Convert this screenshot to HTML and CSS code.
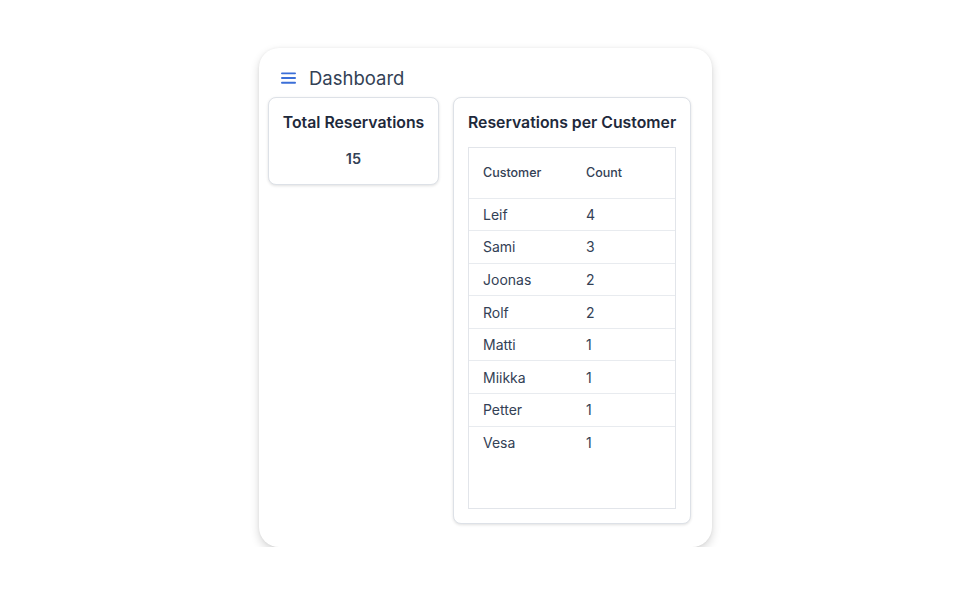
FILE: index.html
```html
<!DOCTYPE html>
<html lang="en">
<head>
<meta charset="utf-8">
<title>Dashboard</title>
<link rel="stylesheet" href="styles.css">
</head>
<body>
<div class="page">
  <div class="panel">
    <div class="header">
      <svg class="menu" width="16" height="12" viewBox="0 0 16 12"><rect x="0" y="0" width="16" height="2" rx="1"/><rect x="0" y="5" width="16" height="2" rx="1"/><rect x="0" y="10" width="16" height="2" rx="1"/></svg>
      <span class="title">Dashboard</span>
    </div>
    <div class="grid">
      <div class="card total">
        <h2 class="card-title">Total Reservations</h2>
        <div class="total-value">15</div>
      </div>
      <div class="card per-customer">
        <h2 class="card-title">Reservations per Customer</h2>
        <div class="table-box">
          <table class="table">
            <thead>
              <tr><th>Customer</th><th>Count</th></tr>
            </thead>
            <tbody>
              <tr><td>Leif</td><td>4</td></tr>
              <tr><td>Sami</td><td>3</td></tr>
              <tr><td>Joonas</td><td>2</td></tr>
              <tr><td>Rolf</td><td>2</td></tr>
              <tr><td>Matti</td><td>1</td></tr>
              <tr><td>Miikka</td><td>1</td></tr>
              <tr><td>Petter</td><td>1</td></tr>
              <tr><td>Vesa</td><td>1</td></tr>
            </tbody>
          </table>
        </div>
      </div>
    </div>
  </div>
</div>
</body>
</html>
```
FILE: styles.css
```css
* { box-sizing: border-box; }
html, body { margin: 0; padding: 0; background: #ffffff; }
body { font-family: Inter, "Noto Sans", sans-serif; color: #334155; }
.page { padding: 48px 0 0 259px; }
.panel {
  width: 453px;
  height: 499px;
  background: #fff;
  border-radius: 20px;
  box-shadow: 0 4px 10px rgba(0,0,0,0.16), 0 0 3px rgba(0,0,0,0.06);
  padding: 17px 21px 23px 9px;
}
.header {
  display: flex;
  align-items: center;
  height: 26px;
  padding-left: 13px;
  margin-bottom: 6px;
}
.menu { fill: #3b6fd8; width: 15px; height: 12px; margin-right: 13px; }
.title { font-size: 18.5px; color: #334155; font-weight: 400; }
.grid { display: flex; align-items: flex-start; gap: 14px; }
.card {
  background: #fff;
  border: 1px solid #dde1e7;
  border-radius: 8px;
  box-shadow: 0 1px 3px rgba(0,0,0,0.12);
}
.card-title { margin: 0; font-size: 15.8px; font-weight: 600; color: #1e293b; line-height: 20px; white-space: nowrap; }
.total { width: 171px; height: 88px; padding-top: 15px; text-align: center; }
.total-value { margin-top: 16px; font-size: 14.5px; font-weight: 600; color: #334155; line-height: 20px; }
.per-customer { width: 238px; height: 427px; padding: 15px 14px 14px 14px; }
.table-box {
  margin-top: 14px;
  height: 362px;
  border: 1px solid #e2e5ea;
}
.table { width: 100%; border-collapse: collapse; table-layout: fixed; }
.table th {
  text-align: left;
  font-size: 12.5px;
  font-weight: 500;
  color: #334155;
  height: 50px;
  padding: 0 0 0 14px;
  border-bottom: 1px solid #e8ebef;
}
.table td {
  font-size: 14px;
  color: #334155;
  height: 32.6px;
  padding: 0 0 0 14px;
  border-bottom: 1px solid #e8ebef;
}
.table tbody tr:last-child td { border-bottom: none; }
```
